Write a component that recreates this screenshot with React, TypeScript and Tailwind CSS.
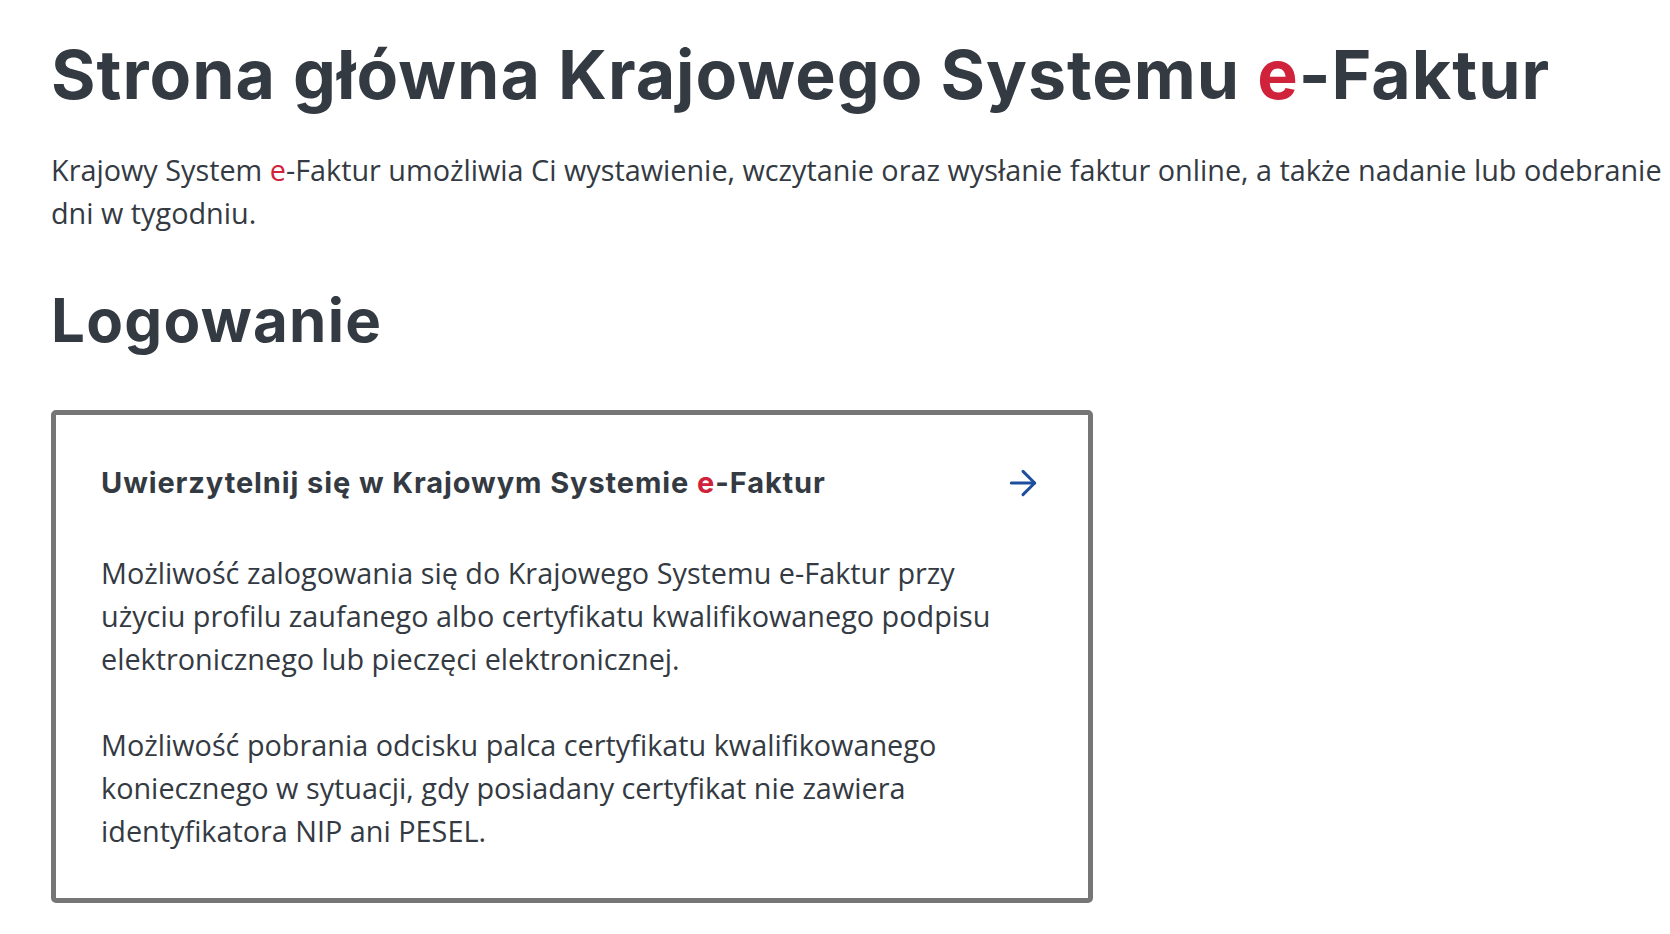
import { FC } from "react";
import { ArrowRight } from "lucide-react";

const E: FC = () => <span className="text-[#d0223a]">e</span>;

const LoginCard: FC = () => {
  return (
    <a
      href="#"
      className="block w-[1042px] rounded-[5px] border-[5px] border-[#767676] bg-white px-[45px] pt-[46px] pb-[46px]"
    >
      <div className="flex items-center justify-between">
        <h3 className="font-['Inter',sans-serif] text-[29px] font-bold tracking-[0.9px] text-[#343a42]">
          Uwierzytelnij się w Krajowym Systemie <E />-Faktur
        </h3>
        <ArrowRight className="h-[40px] w-[40px] text-[#1f4e9e]" strokeWidth={1.8} />
      </div>
      <div className="mt-[46px] flex flex-col gap-[43px] font-['Open_Sans',sans-serif] text-[28.8px] leading-[43px] text-[#343a42]">
        <p>
          Możliwość zalogowania się do Krajowego Systemu e-Faktur przy
          <br />
          użyciu profilu zaufanego albo certyfikatu kwalifikowanego podpisu
          <br />
          elektronicznego lub pieczęci elektronicznej.
        </p>
        <p>
          Możliwość pobrania odcisku palca certyfikatu kwalifikowanego
          <br />
          koniecznego w sytuacji, gdy posiadany certyfikat nie zawiera
          <br />
          identyfikatora NIP ani PESEL.
        </p>
      </div>
    </a>
  );
};

export default function App() {
  return (
    <div className="min-h-[934px] w-full overflow-hidden bg-white text-[#343a42]">
      <main className="px-[51px] pt-[30px] pb-10">
        <h1 className="whitespace-nowrap font-['Inter',sans-serif] text-[68px] leading-[88px] font-bold tracking-[1px]">
          Strona główna Krajowego Systemu <E />-Faktur
        </h1>
        <p className="mt-[30px] w-[2200px] font-['Open_Sans',sans-serif] text-[28.8px] leading-[43px]">
          Krajowy System <E />-Faktur umożliwia Ci wystawienie, wczytanie oraz wysłanie faktur online, a także nadanie lub odebranie UPO 24 godziny na dobę, 7
          <br />
          dni w tygodniu.
        </p>
        <h2 className="mt-[50px] font-['Inter',sans-serif] text-[60px] leading-[72px] font-bold tracking-[1.3px]">
          Logowanie
        </h2>
        <div className="mt-[54px]">
          <LoginCard />
        </div>
      </main>
    </div>
  );
}
